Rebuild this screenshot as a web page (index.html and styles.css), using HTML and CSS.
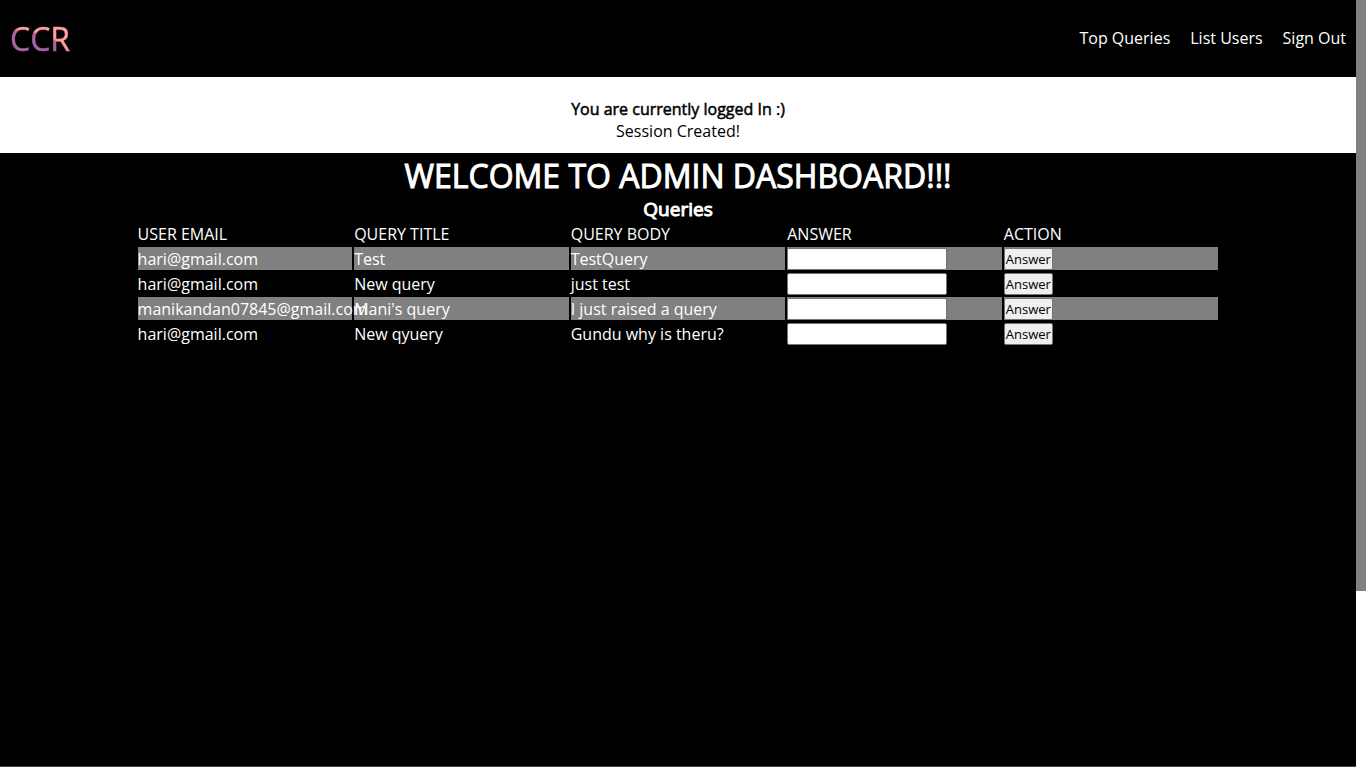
FILE: index.html
```html
<!DOCTYPE html>
<html lang="en">
<head>
<meta charset="utf-8">
<title>CCR Admin Dashboard</title>
<link rel="stylesheet" href="styles.css">
</head>
<body>
<div class="page">
  <header class="navbar">
    <a class="logo" href="#">CCR</a>
    <nav class="links">
      <a href="#">Top Queries</a>
      <a href="#">List Users</a>
      <a href="#">Sign Out</a>
    </nav>
  </header>
  <section class="notice">
    <h4 class="notice-title">You are currently logged In :)</h4>
    <p class="notice-text">Session Created!</p>
  </section>
  <main class="dashboard">
    <h1 class="title">WELCOME TO ADMIN DASHBOARD!!!</h1>
    <h3 class="subtitle">Queries</h3>
    <table class="queries">
      <thead>
        <tr><th>USER EMAIL</th><th>QUERY TITLE</th><th>QUERY BODY</th><th>ANSWER</th><th>ACTION</th></tr>
      </thead>
      <tbody>
        <tr><td>hari@gmail.com</td><td>Test</td><td>TestQuery</td><td><input class="answer" type="text" aria-label="Answer to Test"></td><td><button class="send" type="button">Answer</button></td></tr>
        <tr><td>hari@gmail.com</td><td>New query</td><td>just test</td><td><input class="answer" type="text" aria-label="Answer to New query"></td><td><button class="send" type="button">Answer</button></td></tr>
        <tr><td>manikandan07845@gmail.com</td><td>Mani's query</td><td>I just raised a query</td><td><input class="answer" type="text" aria-label="Answer to Mani's query"></td><td><button class="send" type="button">Answer</button></td></tr>
        <tr><td>hari@gmail.com</td><td>New qyuery</td><td>Gundu why is theru?</td><td><input class="answer" type="text" aria-label="Answer to New qyuery"></td><td><button class="send" type="button">Answer</button></td></tr>
      </tbody>
    </table>
  </main>
</div>
<div class="scroll-track"><div class="scroll-thumb"></div></div>
</body>
</html>
```

FILE: styles.css
```css
* {
  box-sizing: border-box;
  margin: 0;
  padding: 0;
}

body {
  display: flex;
  min-height: 100vh;
  font-family: "Open Sans", sans-serif;
  font-size: 16px;
  line-height: 22px;
  background: #000;
  color: #fff;
}

.page {
  flex: 1;
  min-width: 0;
  display: flex;
  flex-direction: column;
  border-bottom: 1px solid #444;
}

.navbar {
  display: flex;
  align-items: center;
  justify-content: space-between;
  padding: 16px 10px;
}

.logo {
  font-size: 32px;
  line-height: 45px;
  text-decoration: none;
  color: transparent;
  background: radial-gradient(ellipse 62px 32px at 0 100%, #a864a8 0%, #a864a8 82%, #c9588c 94%, #ffa09a 100%);
  -webkit-background-clip: text;
  background-clip: text;
  -webkit-text-stroke: 0.5px transparent;
}

.links {
  display: flex;
  gap: 20px;
  padding-bottom: 2px;
}

.links a {
  color: #fff;
  text-decoration: none;
}

.notice {
  padding: 21px 0 11px;
  background: #fff;
  color: #000;
  text-align: center;
}

.notice-title,
.title,
.subtitle {
  font-weight: 400;
  -webkit-text-stroke: 1px currentColor;
}

.notice-title {
  font-size: 16px;
  line-height: 22px;
  -webkit-text-stroke-width: 0.5px;
}

.dashboard {
  flex: 1;
  padding-top: 1px;
  text-align: center;
}

.title {
  font-size: 32px;
  line-height: 44px;
}

.subtitle {
  font-size: 19px;
  line-height: 22px;
}

.queries {
  width: 80%;
  margin: 0 auto;
  table-layout: fixed;
  border-spacing: 2px;
  text-align: left;
}

.queries th,
.queries td {
  height: 23px;
  font-weight: 400;
  white-space: nowrap;
}

.queries tbody tr:nth-child(odd) td {
  background: #808080;
}

.answer,
.send {
  display: block;
  height: 22px;
  border: 1px solid #767676;
  border-radius: 2px;
  font-family: "Open Sans", sans-serif;
  font-size: 13px;
  line-height: 18px;
}

.answer {
  width: 160px;
  background: #fff;
}

.send {
  padding: 0 1px;
  background: #efefef;
  color: #000;
}

.scroll-track {
  width: 10px;
  background: #fff;
}

.scroll-thumb {
  height: 77%;
  background: #808080;
}
```
